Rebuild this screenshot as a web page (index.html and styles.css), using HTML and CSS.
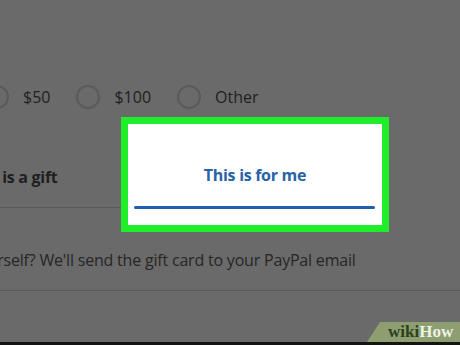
FILE: index.html
```html
<!DOCTYPE html>
<html>
<head>
<meta charset="utf-8">
<link rel="stylesheet" href="styles.css">
</head>
<body>
<div class="page">
  <p class="intro">you get iCloud storage to secure files from all your Apple</p>
  <div class="amounts">
    <div class="opt"><span class="radio"></span><span class="label">$50</span></div>
    <div class="opt"><span class="radio"></span><span class="label">$100</span></div>
    <div class="opt"><span class="radio"></span><span class="label">Other</span></div>
  </div>
  <div class="tabs">
    <div class="tab tab-gift">This is a gift</div>
    <div class="tab tab-me">
      <span class="tab-me-text">This is for me</span>
      <span class="tab-line"></span>
    </div>
  </div>
  <p class="note">Buying for yourself? We'll send the gift card to your PayPal email</p>
  <div class="rule"></div>
</div>
<div class="strip"></div>
<div class="wm"><span class="wm-wiki">wiki</span><span class="wm-how">How</span></div>
</body>
</html>
```
FILE: styles.css
```css
html, body {
  margin: 0;
  padding: 0;
}
body {
  width: 460px;
  height: 345px;
  overflow: hidden;
  background: #6a6a6a;
  font-family: "Open Sans", "Noto Sans", sans-serif;
  color: #1f1f1f;
  display: flex;
  flex-direction: column;
  position: relative;
}
.page {
  flex: 1;
}
.intro {
  margin: -23px 0 0 7px;
  font-size: 16px;
  line-height: 24px;
  height: 24px;
  white-space: nowrap;
  letter-spacing: -0.2px;
}
.amounts {
  display: flex;
  align-items: center;
  margin: 84px 0 0 -15px;
  height: 24px;
}
.opt {
  display: flex;
  align-items: center;
  gap: 14px;
  margin-right: 26px;
}
.radio {
  width: 24px;
  height: 24px;
  box-sizing: border-box;
  border: 2px solid #5a5a5a;
  border-radius: 50%;
}
.label {
  font-size: 16px;
  line-height: 24px;
}
.tabs {
  display: flex;
  align-items: flex-start;
  margin-left: -33px;
  height: 99px;
}
.tab {
  font-size: 16px;
  font-weight: 700;
  line-height: 24px;
  letter-spacing: -0.3px;
}
.tab-gift {
  width: 161px;
  padding-top: 56px;
  padding-bottom: 18px;
  border-bottom: 1px solid #5b5b5b;
  white-space: nowrap;
}
.tab-me {
  width: 254px;
  height: 101px;
  margin-top: 15px;
  box-sizing: border-box;
  padding-top: 39px;
  background: #ffffff;
  outline: 7px solid #21ee2b;
  display: flex;
  flex-direction: column;
  align-items: center;
  position: relative;
  z-index: 1;
}
.tab-me-text {
  color: #2763a6;
}
.tab-line {
  display: block;
  width: 241px;
  height: 3px;
  margin: 19px 7px 0 6px;
  background: #1f60ad;
  border-radius: 2px;
}
.note {
  margin: 40px 0 0 -108px;
  font-size: 16px;
  line-height: 24px;
  white-space: nowrap;
  color: #262626;
  letter-spacing: -0.2px;
}
.rule {
  margin-top: 18px;
  height: 1px;
  background: #5a5a5a;
}
.strip {
  height: 3px;
  background: #141414;
}
.wm {
  position: absolute;
  right: 0;
  bottom: 3px;
  width: 93px;
  height: 20px;
  background: #8d9e70;
  clip-path: polygon(13px 0, 100% 0, 100% 100%, 0 100%);
  font-family: "Liberation Serif", serif;
  font-weight: 700;
  font-size: 17px;
  line-height: 20px;
  box-sizing: border-box;
  padding-left: 21px;
  white-space: nowrap;
}
.wm-wiki {
  color: #2c3f1e;
}
.wm-how {
  color: #eef2e6;
}
```
